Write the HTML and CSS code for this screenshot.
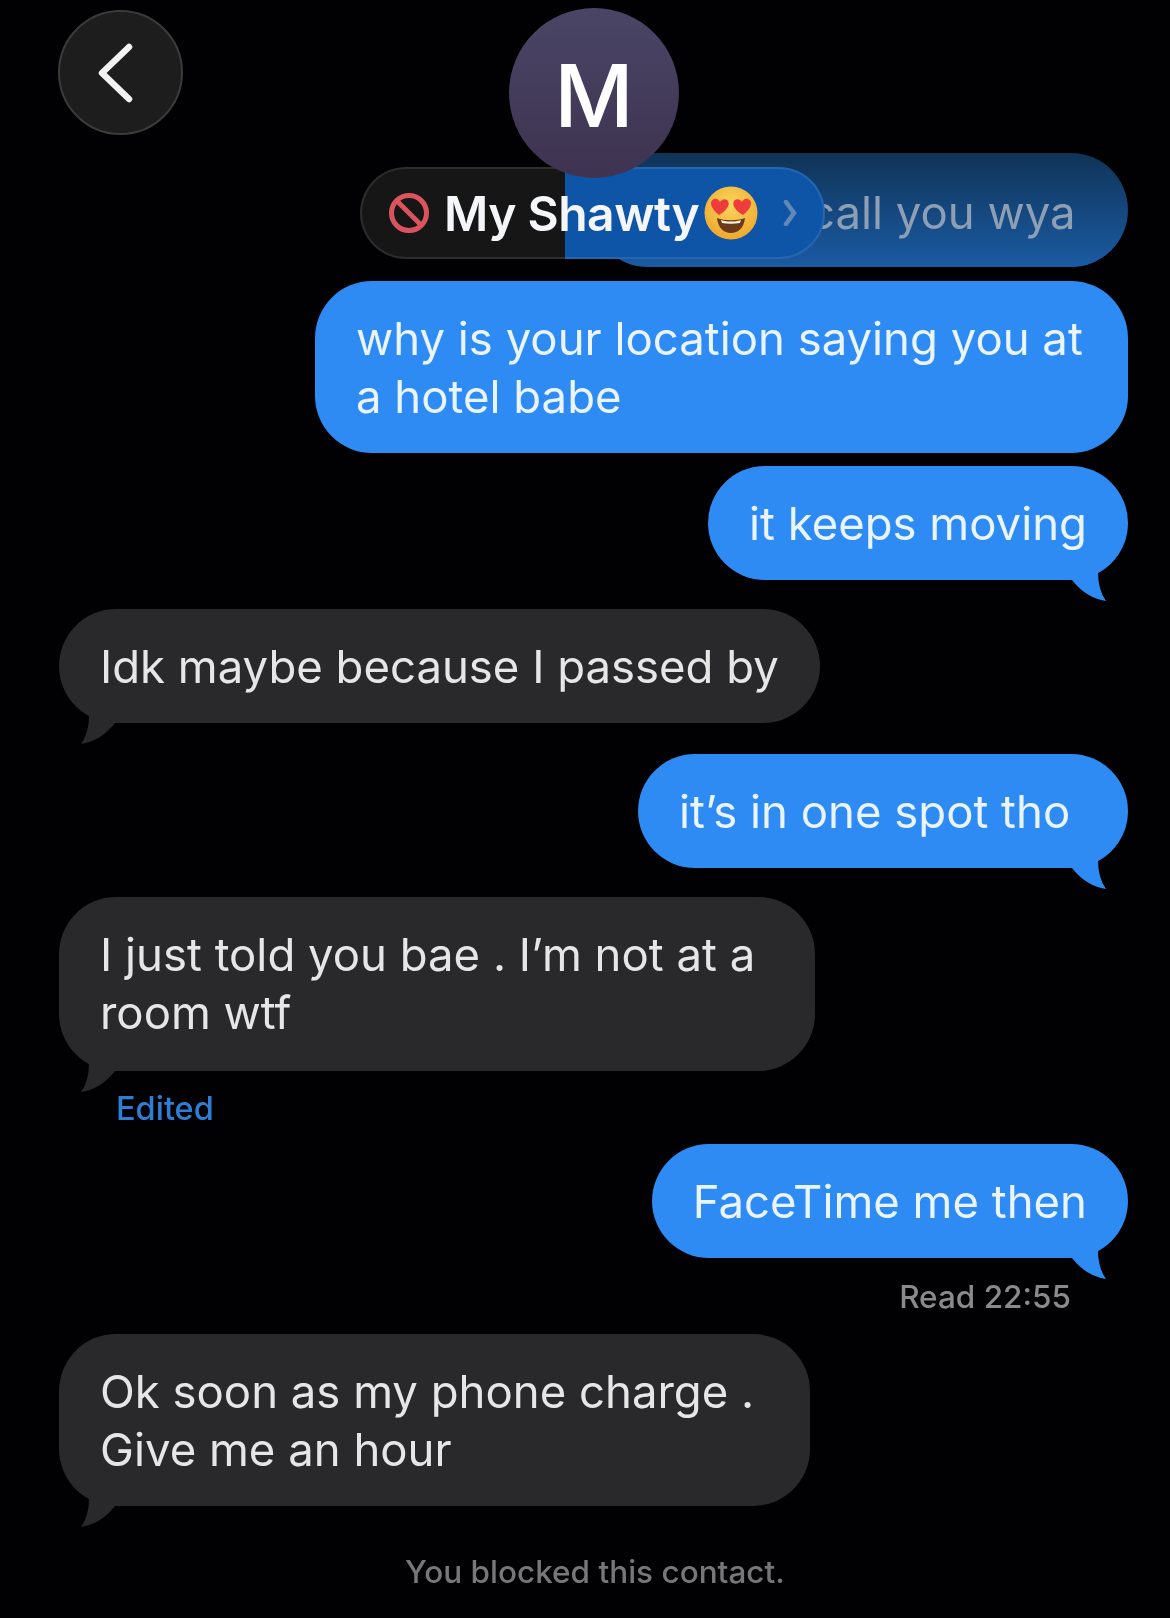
FILE: index.html
```html
<!DOCTYPE html>
<html lang="en">
<head>
<meta charset="UTF-8">
<meta name="viewport" content="width=device-width, initial-scale=1.0">
<title>My Shawty</title>
<link rel="stylesheet" href="styles.css">
</head>
<body>
<div class="screen">
<a class="back-button">
<svg width="36" height="60" viewBox="0 0 36 60"><path d="M32 4 L5 30 L32 56" fill="none" stroke="#f2f2f2" stroke-width="6.5" stroke-linecap="round" stroke-linejoin="round"/></svg>
</a>
<div class="avatar">M</div>
<div class="contact-pill">
<svg class="ban-icon" width="42" height="42" viewBox="0 0 42 42"><circle cx="21" cy="21" r="17.5" fill="none" stroke="#d9545c" stroke-width="5"/><path d="M9 9 L33 33" stroke="#d9545c" stroke-width="5"/></svg>
<span class="contact-name">My Shawty</span>
<svg class="emoji" width="54" height="54" viewBox="0 0 54 54">
<defs>
<radialGradient id="face" cx="50%" cy="35%" r="70%"><stop offset="0" stop-color="#fbd65c"/><stop offset="1" stop-color="#eda52c"/></radialGradient>
</defs>
<circle cx="27" cy="27" r="26.5" fill="url(#face)"/>
<path d="M15 29 C6 22 5 15 10 13 C13 12 15 14 16 16 C17 14 20 12 23 14 C27 17 24 24 15 29 Z" fill="#ee3b3b"/>
<path d="M39 29 C48 22 49 15 44 13 C41 12 39 14 38 16 C37 14 34 12 31 14 C27 17 30 24 39 29 Z" fill="#ee3b3b"/>
<path d="M13 32 C20 35 34 35 41 32 C40 42 34 47 27 47 C20 47 14 42 13 32 Z" fill="#6b3a1a"/>
<path d="M17 34 C23 36 31 36 37 34 L36 37 C30 38 24 38 18 37 Z" fill="#fff5e0"/>
</svg>
<svg class="pill-chevron" width="14" height="26" viewBox="0 0 14 26"><path d="M3 2 L11 13 L3 24" fill="none" stroke="#6288b8" stroke-width="4.5" stroke-linecap="round"/></svg>
</div>
<div class="thread">
<div class="bubble sent faded no-tail">call you wya</div>
<div class="bubble sent no-tail gap-small width-location">why is your location saying you at<br>a hotel babe</div>
<div class="bubble sent gap-small">it keeps moving</div>
<div class="bubble received gap-large">Idk maybe because I passed by</div>
<div class="bubble sent gap-large width-spot">it’s in one spot tho</div>
<div class="bubble received gap-large width-room">I just told you bae . I’m not at a<br>room wtf</div>
<div class="edited-label">Edited</div>
<div class="bubble sent gap-edited">FaceTime me then</div>
<div class="read-label">Read 22:55</div>
<div class="bubble received gap-label width-charge">Ok soon as my phone charge .<br>Give me an hour</div>
<div class="blocked-note">You blocked this contact.</div>
</div>
</div>
</body>
</html>
```

FILE: styles.css
```css
body {
    font-family: Inter, "Liberation Sans", sans-serif;
    margin: 0;
    padding: 0;
    background-color: #000;
}
.screen {
    position: relative;
    width: 1170px;
    height: 1618px;
    overflow: hidden;
    background-color: #010002;
    filter: blur(0.6px);
}
.back-button {
    position: absolute;
    left: 58px;
    top: 10px;
    width: 125px;
    height: 125px;
    box-sizing: border-box;
    border: 2px solid #3b3b3b;
    border-radius: 50%;
    background-color: #1d1d1d;
    display: flex;
    align-items: center;
    justify-content: center;
    padding-right: 12px;
}
.avatar {
    position: absolute;
    z-index: 3;
    left: 509px;
    top: 8px;
    width: 170px;
    height: 170px;
    box-sizing: border-box;
    padding-top: 4px;
    border-radius: 50%;
    background: linear-gradient(#4a4566, #3e3350);
    color: #fff;
    font-size: 87px;
    font-weight: 500;
    display: flex;
    align-items: center;
    justify-content: center;
}
.contact-pill {
    position: absolute;
    z-index: 2;
    left: 360px;
    top: 167px;
    width: 465px;
    height: 92px;
    box-sizing: border-box;
    padding-left: 26px;
    border: 2px solid rgba(255, 255, 255, 0.1);
    border-radius: 46px;
    background: linear-gradient(90deg, #161616 205px, #0e55a8 205px);
    background-origin: border-box;
    display: flex;
    align-items: center;
    color: #f4f6f9;
}
.ban-icon {
    flex-shrink: 0;
}
.contact-name {
    margin-left: 14px;
    font-size: 48px;
    font-weight: 600;
    white-space: nowrap;
    letter-spacing: -0.5px;
}
.emoji {
    margin-left: 5px;
    flex-shrink: 0;
}
.pill-chevron {
    margin-left: 25px;
    flex-shrink: 0;
}
.thread {
    display: flex;
    flex-direction: column;
    padding: 153px 42px 0 59px;
}
.bubble {
    position: relative;
    box-sizing: border-box;
    padding: 29px 41px 27px;
    border-radius: 57px;
    font-size: 45.5px;
    line-height: 58px;
    white-space: nowrap;
}
.bubble::after {
    content: "";
    position: absolute;
    bottom: -22px;
    width: 40px;
    height: 42px;
    background-color: inherit;
    clip-path: path("M0 0 H28 V12 Q28 30 36 41 Q16 38 2 20 Z");
}
.sent {
    align-self: flex-end;
    background-color: #2d8bf3;
    color: #eaf4fe;
}
.sent::after {
    right: 18px;
}
.received {
    align-self: flex-start;
    background-color: #29292b;
    color: #e6e6e6;
}
.received::after {
    left: 18px;
    transform: scaleX(-1);
}
.no-tail::after {
    display: none;
}
.faded {
    width: 537px;
    margin-bottom: 1px;
    padding: 31px 41px 25px 218px;
    background: linear-gradient(#103357, #1a5ba3);
    color: #8c9fb4;
}
.gap-small {
    margin-top: 13px;
}
.gap-large {
    margin-top: 29px;
}
.gap-edited {
    margin-top: 20px;
}
.gap-label {
    margin-top: 22px;
}
.width-location {
    width: 813px;
}
.width-spot {
    margin-top: 31px;
    width: 490px;
}
.width-room {
    width: 756px;
    padding-bottom: 29px;
}
.width-charge {
    width: 751px;
}
.edited-label {
    margin: 23px 0 0 57px;
    font-size: 32.5px;
    line-height: 30px;
    font-weight: 500;
    color: #2f7ed6;
}
.read-label {
    margin: 24px 57px 0 0;
    align-self: flex-end;
    font-size: 31.5px;
    line-height: 30px;
    font-weight: 500;
    color: #8a8a8d;
}
.blocked-note {
    margin: 51px 0 0 346px;
    font-size: 31.5px;
    line-height: 30px;
    font-weight: 500;
    color: #77777a;
}
```
